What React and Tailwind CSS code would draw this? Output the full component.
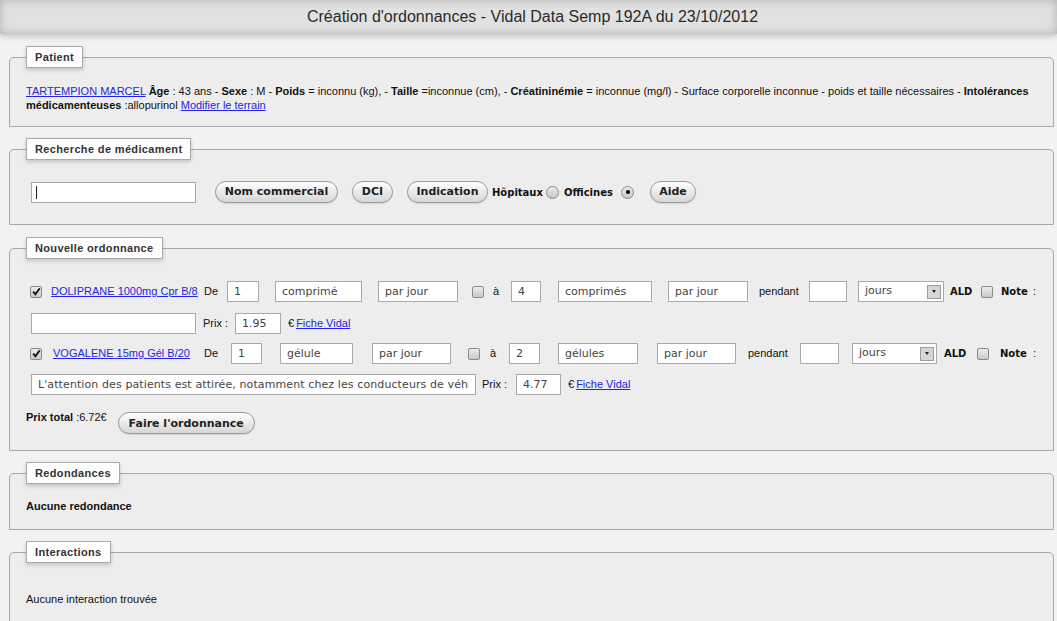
import React from 'react';

const sans = "font-['Liberation_Sans',Arial,sans-serif]";
const deja = "font-['DejaVu_Sans',Verdana,sans-serif]";

const Field = ({ className = '', value = '' }) => (
  <input
    readOnly
    value={value}
    className={`h-[21px] shrink-0 border border-[#a9a9a9] bg-white px-[6px] text-[11px] text-[#444] outline-none ${deja} ${className}`}
  />
);

const Check = ({ checked, className = '' }) => (
  <span
    className={`flex h-[12px] w-[12px] shrink-0 items-center justify-center rounded-[2px] border border-[#8a8a8a] bg-gradient-to-b from-[#ececec] to-[#c9c9c9] ${className}`}
  >
    {checked && (
      <svg width="9" height="9" viewBox="0 0 9 9">
        <path d="M1.2 4.6 L3.4 7.3 L7.8 1.2" fill="none" stroke="#111" strokeWidth="1.9" />
      </svg>
    )}
  </span>
);

const Radio = ({ checked, className = '' }) => (
  <span
    className={`flex h-[13px] w-[13px] shrink-0 items-center justify-center rounded-full border border-[#8a8a8a] bg-gradient-to-b from-[#ececec] to-[#c6c6c6] ${className}`}
  >
    {checked && <span className="h-[4px] w-[4px] rounded-full bg-black" />}
  </span>
);

const Button = ({ children, className = '' }) => (
  <button
    className={`h-[22px] shrink-0 rounded-full border border-[#9a9a9a] bg-gradient-to-b from-white to-[#d6d6d6] text-[11px] font-bold text-[#222] shadow-[0_1px_1px_rgba(0,0,0,0.1)] ${deja} ${className}`}
  >
    {children}
  </button>
);

const Select = ({ className = '' }) => (
  <div
    className={`flex h-[21px] shrink-0 items-center justify-between border border-[#a9a9a9] bg-white pl-[6px] pr-[2px] text-[11px] text-[#444] ${deja} ${className}`}
  >
    <span>jours</span>
    <span className="flex h-[14px] w-[14px] items-center justify-center border border-[#9c9c9c] bg-[#d6d6d6]">
      <span className="h-0 w-0 border-x-[2px] border-t-[3px] border-x-transparent border-t-[#222]" />
    </span>
  </div>
);

const Section = ({ title, className = '', children }) => (
  <fieldset
    className={`mr-[3px] ml-[9px] min-w-0 rounded-t-[5px] border border-[#a8a8a8] bg-[#ededed] px-4 ${className}`}
  >
    <legend
      className={`h-[22px] border border-[#aaaaaa] bg-white px-[8px] text-[11px] leading-[20px] font-bold tracking-[0.35px] text-[#333] shadow-[0_2px_4px_rgba(0,0,0,0.18)] ${sans}`}
    >
      {title}
    </legend>
    {children}
  </fieldset>
);

const link = 'text-[#2424e6] underline';

export default function App() {
  return (
    <div className={`min-h-screen bg-[#f2f2f2] pb-6 text-[#111] ${sans}`}>
      {/* Title bar */}
      <div className="relative z-10 flex h-[34px] items-center justify-center bg-[#e1e1e1] pl-[8px] shadow-[inset_0_0_10px_rgba(0,0,0,0.22),0_2px_6px_rgba(0,0,0,0.22)]">
        <h1 className="text-[16px] text-[#2a2a2a]">
          Création d'ordonnances - Vidal Data Semp 192A du 23/10/2012
        </h1>
      </div>

      {/* Patient */}
      <Section title="Patient" className="mt-[12px] pt-[17px] pb-[14px]">
        <p className="text-[11px] leading-[13.5px]">
          <a className={link}>TARTEMPION MARCEL</a> <b>Âge</b> :  43 ans - <b>Sexe</b> : M - <b>Poids</b> = inconnu (kg), -{' '}
          <b>Taille</b> =inconnue (cm), - <b>Créatininémie</b> = inconnue (mg/l) - Surface corporelle inconnue - poids et
          taille nécessaires - <b>Intolérances médicamenteuses</b> :allopurinol <a className={link}>Modifier le terrain</a>
        </p>
      </Section>

      {/* Recherche */}
      <Section title="Recherche de médicament" className="mt-[11px] pt-[21px] pb-[21px]">
        <div className="flex h-[22px] items-center">
          <div className="ml-[5px] flex h-[21px] w-[165px] shrink-0 items-center border border-[#a9a9a9] bg-white pl-[4px]">
            <span className="h-[13px] w-[1px] bg-[#222]" />
          </div>
          <Button className="ml-[19px] w-[123px]">Nom commercial</Button>
          <Button className="ml-[14px] w-[41px]">DCI</Button>
          <Button className="ml-[14px] w-[81px]">Indication</Button>
          <span className={`ml-[4px] w-[46px] text-[10px] font-bold whitespace-nowrap ${deja}`}>Hôpitaux</span>
          <Radio className="ml-[8px]" />
          <span className={`ml-[5px] w-[49px] text-[10px] font-bold whitespace-nowrap ${deja}`}>Officines</span>
          <Radio checked className="ml-[8px]" />
          <Button className="ml-[16px] w-[46px]">Aide</Button>
        </div>
      </Section>

      {/* Nouvelle ordonnance */}
      <Section title="Nouvelle ordonnance" className="mt-[12px] pt-[22px] pb-[16px]">
        <div className="flex h-[21px] items-center text-[11px] whitespace-nowrap">
          <Check checked className="ml-[4px]" />
          <a className={`ml-[9px] w-[146px] ${link}`}>DOLIPRANE 1000mg Cpr B/8</a>
          <span className="ml-[7px] w-[12px]">De</span>
          <Field className="ml-[11px] w-[32px]" value="1" />
          <Field className="ml-[16px] w-[87px]" value="comprimé" />
          <Field className="ml-[16px] w-[80px]" value="par jour" />
          <Check className="ml-[14px]" />
          <span className="ml-[9px] w-[6px]">à</span>
          <Field className="ml-[12px] w-[30px]" value="4" />
          <Field className="ml-[17px] w-[94px]" value="comprimés" />
          <Field className="ml-[16px] w-[80px]" value="par jour" />
          <span className="ml-[11px] w-[39px]">pendant</span>
          <Field className="ml-[11px] w-[38px]" />
          <Select className="ml-[11px] w-[86px]" />
          <span className={`ml-[6px] w-[22px] text-[10px] font-bold ${deja}`}>ALD</span>
          <Check className="ml-[9px]" />
          <span className={`ml-[8px] w-[25px] text-[10px] font-bold ${deja}`}>Note</span>
          <span className="ml-[7px]">:</span>
        </div>

        <div className="mt-[11px] flex h-[21px] items-center text-[11px] whitespace-nowrap">
          <Field className="ml-[5px] w-[165px]" />
          <span className="ml-[7px] w-[23px]">Prix :</span>
          <Field className="ml-[9px] w-[46px]" value="1.95" />
          <span className="ml-[7px]">€</span>
          <a className={`ml-[2px] ${link}`}>Fiche Vidal</a>
        </div>

        <div className="mt-[9px] flex h-[21px] items-center text-[11px] whitespace-nowrap">
          <Check checked className="ml-[4px]" />
          <a className={`ml-[11px] w-[144px] ${link}`}>VOGALENE 15mg Gél B/20</a>
          <span className="ml-[7px] w-[12px]">De</span>
          <Field className="ml-[15px] w-[31px]" value="1" />
          <Field className="ml-[18px] w-[73px]" value="gélule" />
          <Field className="ml-[19px] w-[79px]" value="par jour" />
          <Check className="ml-[17px]" />
          <span className="ml-[10px] w-[6px]">à</span>
          <Field className="ml-[13px] w-[31px]" value="2" />
          <Field className="ml-[18px] w-[80px]" value="gélules" />
          <Field className="ml-[19px] w-[79px]" value="par jour" />
          <span className="ml-[12px] w-[39px]">pendant</span>
          <Field className="ml-[13px] w-[39px]" />
          <Select className="ml-[13px] w-[85px]" />
          <span className={`ml-[7px] w-[22px] text-[10px] font-bold ${deja}`}>ALD</span>
          <Check className="ml-[11px]" />
          <span className={`ml-[11px] w-[25px] text-[10px] font-bold ${deja}`}>Note</span>
          <span className="ml-[8px]">:</span>
        </div>

        <div className="mt-[10px] flex h-[21px] items-center text-[11px] whitespace-nowrap">
          <Field
            className="ml-[5px] w-[445px] tracking-[0.1px]"
            value="L'attention des patients est attirée, notamment chez les conducteurs de véhicules et les utilisateurs de machines"
          />
          <span className="ml-[6px] w-[23px]">Prix :</span>
          <Field className="ml-[11px] w-[45px]" value="4.77" />
          <span className="ml-[7px]">€</span>
          <a className={`ml-[2px] ${link}`}>Fiche Vidal</a>
        </div>

        <div className="mt-[16px] flex items-start text-[11px] leading-[13px] whitespace-nowrap">
          <span>
            <b>Prix total</b> :6.72€
          </span>
          <Button className="mt-[1px] ml-[11px] w-[137px]">Faire l'ordonnance</Button>
        </div>
      </Section>

      {/* Redondances */}
      <Section title="Redondances" className="mt-[11px] pt-[16px] pb-[16px]">
        <p className="text-[11px] leading-[13px] font-bold">Aucune redondance</p>
      </Section>

      {/* Interactions */}
      <Section title="Interactions" className="mt-[11px] pt-[30px] pb-[20px]">
        <p className="text-[11px] leading-[13px]">Aucune interaction trouvée</p>
      </Section>
    </div>
  );
}
